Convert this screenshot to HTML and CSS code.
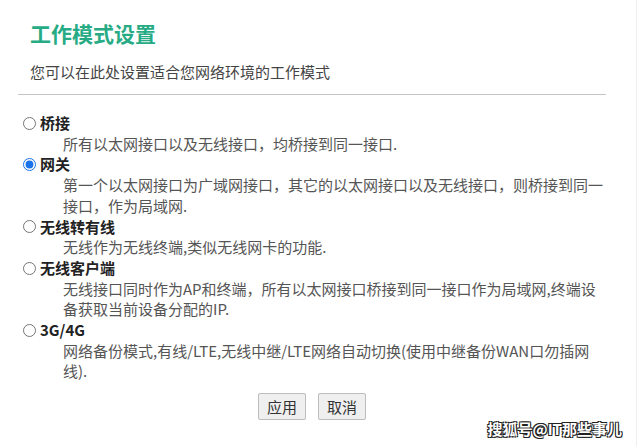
FILE: index.html
```html
<!DOCTYPE html>
<html lang="zh-CN">
<head>
    <meta charset="UTF-8">
    <meta name="viewport" content="width=device-width, initial-scale=1.0">
    <title>工作模式设置</title>
    <link rel="stylesheet" href="styles.css">
</head>
<body>
    <div class="page">
        <div class="header">
            <h1>工作模式设置</h1>
            <p class="intro">您可以在此处设置适合您网络环境的工作模式</p>
        </div>
        <hr class="divider">

        <form class="modes" id="mode-form">
            <div class="mode">
                <label class="mode-title"><input type="radio" name="mode" value="bridge"><span>桥接</span></label>
                <p class="mode-desc">所有以太网接口以及无线接口，均桥接到同一接口.</p>
            </div>
            <div class="mode">
                <label class="mode-title"><input type="radio" name="mode" value="gateway" checked><span>网关</span></label>
                <p class="mode-desc">第一个以太网接口为广域网接口，其它的以太网接口以及无线接口，则桥接到同一接口，作为局域网.</p>
            </div>
            <div class="mode">
                <label class="mode-title"><input type="radio" name="mode" value="wisp"><span>无线转有线</span></label>
                <p class="mode-desc">无线作为无线终端,类似无线网卡的功能.</p>
            </div>
            <div class="mode">
                <label class="mode-title"><input type="radio" name="mode" value="client"><span>无线客户端</span></label>
                <p class="mode-desc">无线接口同时作为AP和终端，所有以太网接口桥接到同一接口作为局域网,终端设备获取当前设备分配的IP.</p>
            </div>
            <div class="mode">
                <label class="mode-title"><input type="radio" name="mode" value="lte"><span>3G/4G</span></label>
                <p class="mode-desc">网络备份模式,有线/LTE,无线中继/LTE网络自动切换(使用中继备份WAN口勿插网线).</p>
            </div>

            <div class="actions">
                <button type="submit">应用</button>
                <button type="button">取消</button>
            </div>
        </form>

        <div class="watermark">搜狐号@IT那些事儿</div>
    </div>
</body>
</html>
```

FILE: styles.css
```css
body {
    margin: 0;
    font-family: "Noto Sans CJK SC", "Noto Sans", sans-serif;
    background: #fff;
    color: #333;
}
.page {
    position: relative;
    width: 637px;
    height: 446px;
    border-right: 1px solid #eeeeee;
    padding-left: 18px;
    box-sizing: border-box;
}
.header {
    padding: 18px 0 0 12px;
}
h1 {
    margin: 0;
    font-size: 21px;
    line-height: 30px;
    font-weight: bold;
    color: #27ab85;
}
.intro {
    margin: 14px 0 0;
    font-size: 15px;
    line-height: 20px;
    color: #444;
}
.divider {
    width: 588px;
    margin: 12px 0 0;
    border: 0;
    border-top: 1px solid #c4c4c4;
    height: 0;
}
.modes {
    width: 588px;
    margin-top: 18px;
    font-size: 15px;
    line-height: 20.7px;
}
.mode-title {
    display: flex;
    align-items: center;
    font-weight: bold;
    color: #222;
}
.mode-title input {
    margin: 0 4px 0 5px;
    width: 13px;
    height: 13px;
    accent-color: #1a73e8;
}
.mode-desc {
    margin: 0;
    padding-left: 45px;
    color: #555;
}
.actions {
    display: flex;
    justify-content: center;
    gap: 12px;
    margin-top: 11px;
}
.actions button {
    font-family: inherit;
    font-size: 15px;
    line-height: 19px;
    padding: 3px 8px;
    color: #333;
    background: #efefef;
    border: 1px solid #bdbdbd;
    border-radius: 2px;
}
.watermark {
    position: absolute;
    right: 14px;
    bottom: 7px;
    font-size: 15px;
    font-weight: bold;
    color: #fff;
    text-shadow: 1px 1px 0 #222, -1px -1px 0 #222, 1px -1px 0 #222, -1px 1px 0 #222;
}
```
